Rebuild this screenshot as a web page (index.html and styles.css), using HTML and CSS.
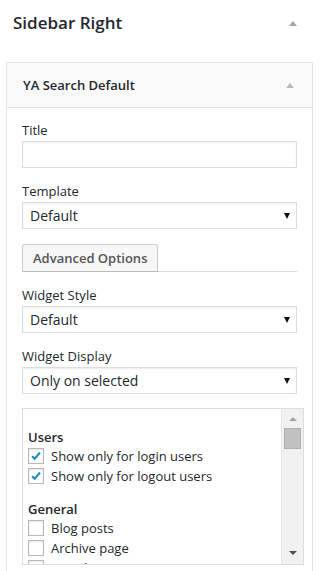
FILE: index.html
```html
<!DOCTYPE html>
<html>
<head>
<meta charset="utf-8">
<link rel="stylesheet" href="styles.css">
</head>
<body>
<div class="sidebar">
  <div class="sidebar-head">
    <h2 class="sidebar-title">Sidebar Right</h2>
    <span class="tri-up dark"></span>
  </div>
  <div class="widget">
    <div class="widget-head">
      <h3 class="widget-title">YA Search Default</h3>
      <span class="tri-up"></span>
    </div>
    <div class="widget-body">
      <label class="lbl">Title</label>
      <div class="input"></div>
      <label class="lbl">Template</label>
      <div class="select"><span>Default</span><span class="tri-down"></span></div>
      <div class="adv-row">
        <div class="btn">Advanced Options</div>
        <div class="adv-line"></div>
      </div>
      <label class="lbl">Widget Style</label>
      <div class="select"><span>Default</span><span class="tri-down"></span></div>
      <label class="lbl">Widget Display</label>
      <div class="select"><span>Only on selected</span><span class="tri-down"></span></div>
      <div class="listbox">
        <div class="list-content">
          <div class="group-title">Users</div>
          <div class="check-row"><span class="cb checked"><svg viewBox="0 0 16 16" width="14" height="14"><path d="M3.5 8.2 L6.5 11 L12.5 4" fill="none" stroke="#1e8cbe" stroke-width="2.4"/></svg></span>Show only for login users</div>
          <div class="check-row"><span class="cb checked"><svg viewBox="0 0 16 16" width="14" height="14"><path d="M3.5 8.2 L6.5 11 L12.5 4" fill="none" stroke="#1e8cbe" stroke-width="2.4"/></svg></span>Show only for logout users</div>
          <div class="group-title general">General</div>
          <div class="check-row"><span class="cb"></span>Blog posts</div>
          <div class="check-row"><span class="cb"></span>Archive page</div>
          <div class="check-row"><span class="cb"></span>Search page</div>
        </div>
        <div class="scrollbar">
          <span class="sb-up"></span>
          <span class="sb-thumb"></span>
          <span class="sb-fill"></span>
          <span class="sb-down"></span>
        </div>
      </div>
    </div>
  </div>
</div>
</body>
</html>
```
FILE: styles.css
```css
html, body {
  margin: 0;
  padding: 0;
  background: #fff;
}
body {
  font-family: "Open Sans", "Noto Sans", sans-serif;
  color: #23282d;
  font-size: 13px;
  width: 320px;
  height: 571px;
  overflow: hidden;
}
.sidebar-head {
  display: flex;
  align-items: center;
  justify-content: space-between;
  height: 46px;
  padding: 0 23px 0 13px;
}
.sidebar-title {
  margin: 0;
  font-size: 17px;
  font-weight: 600;
  color: #23282d;
  line-height: 24px;
}
.tri-up {
  width: 0;
  height: 0;
  border-left: 4px solid transparent;
  border-right: 4px solid transparent;
  border-bottom: 5px solid #b4b9be;
}
.tri-up.dark {
  border-bottom-color: #a0a5aa;
}
.widget {
  margin: 16px 7px 0 6px;
  border: 1px solid #e5e5e5;
  height: 600px;
  background: #fff;
}
.widget-head {
  display: flex;
  align-items: center;
  justify-content: space-between;
  height: 44px;
  background: #f9f9f9;
  border-bottom: 1px solid #e5e5e5;
  padding: 0 18px 0 16px;
}
.widget-title {
  margin: 0;
  font-size: 13px;
  font-weight: 600;
  line-height: 18px;
}
.widget-body {
  padding: 13px 15px 0 15px;
  display: flex;
  flex-direction: column;
}
.lbl {
  display: block;
  font-size: 13px;
  line-height: 18px;
  margin-bottom: 2px;
}
.input {
  height: 25px;
  border: 1px solid #ddd;
  box-shadow: inset 0 1px 2px rgba(0,0,0,0.07);
  margin-bottom: 14px;
}
.select {
  height: 25px;
  border: 1px solid #ddd;
  box-shadow: inset 0 1px 2px rgba(0,0,0,0.07);
  display: flex;
  align-items: center;
  justify-content: space-between;
  padding: 0 6px 0 7px;
  font-size: 14px;
  margin-bottom: 14px;
}
.tri-down {
  width: 0;
  height: 0;
  border-left: 3.5px solid transparent;
  border-right: 3.5px solid transparent;
  border-top: 6px solid #111;
  margin-top: 1px;
}
.adv-row {
  display: flex;
  align-items: flex-end;
  margin-top: 1px;
  margin-bottom: 14px;
}
.btn {
  height: 26px;
  line-height: 26px;
  padding: 0 10px;
  border: 1px solid #ccc;
  border-bottom-color: #bbb;
  border-radius: 3px 3px 0 0;
  background: #f7f7f7;
  font-size: 13px;
  font-weight: 600;
  color: #555;
  white-space: nowrap;
}
.adv-line {
  flex: 1;
  height: 1px;
  background: #ddd;
}
.listbox {
  display: flex;
  height: 155px;
  border: 1px solid #ddd;
  margin-right: -7px;
  overflow: hidden;
}
.list-content {
  flex: 1;
  padding: 19px 6px 0 5px;
  overflow: hidden;
}
.group-title {
  font-size: 13px;
  font-weight: 600;
  line-height: 18px;
}
.group-title.general {
  margin-top: 14px;
}
.check-row {
  display: flex;
  align-items: center;
  height: 20px;
  font-size: 13px;
  white-space: nowrap;
}
.cb {
  flex: none;
  width: 14px;
  height: 14px;
  border: 1px solid #b4b9be;
  box-shadow: inset 0 1px 2px rgba(0,0,0,0.1);
  margin-right: 7px;
  display: flex;
  align-items: center;
  justify-content: center;
  background: #fff;
}
.scrollbar {
  width: 21px;
  background: #f1f1f1;
  border-left: 1px solid #e8e8e8;
  display: flex;
  flex-direction: column;
  align-items: center;
}
.sb-up {
  margin-top: 8px;
  width: 0;
  height: 0;
  border-left: 4px solid transparent;
  border-right: 4px solid transparent;
  border-bottom: 4px solid #a3a3a3;
}
.sb-thumb {
  margin-top: 7px;
  width: 17px;
  height: 21px;
  background: #c1c1c1;
  border: 1px solid #b0b0b0;
  box-sizing: border-box;
}
.sb-fill {
  flex: 1;
}
.sb-down {
  margin-bottom: 9px;
  width: 0;
  height: 0;
  border-left: 4px solid transparent;
  border-right: 4px solid transparent;
  border-top: 4px solid #505050;
}
```
